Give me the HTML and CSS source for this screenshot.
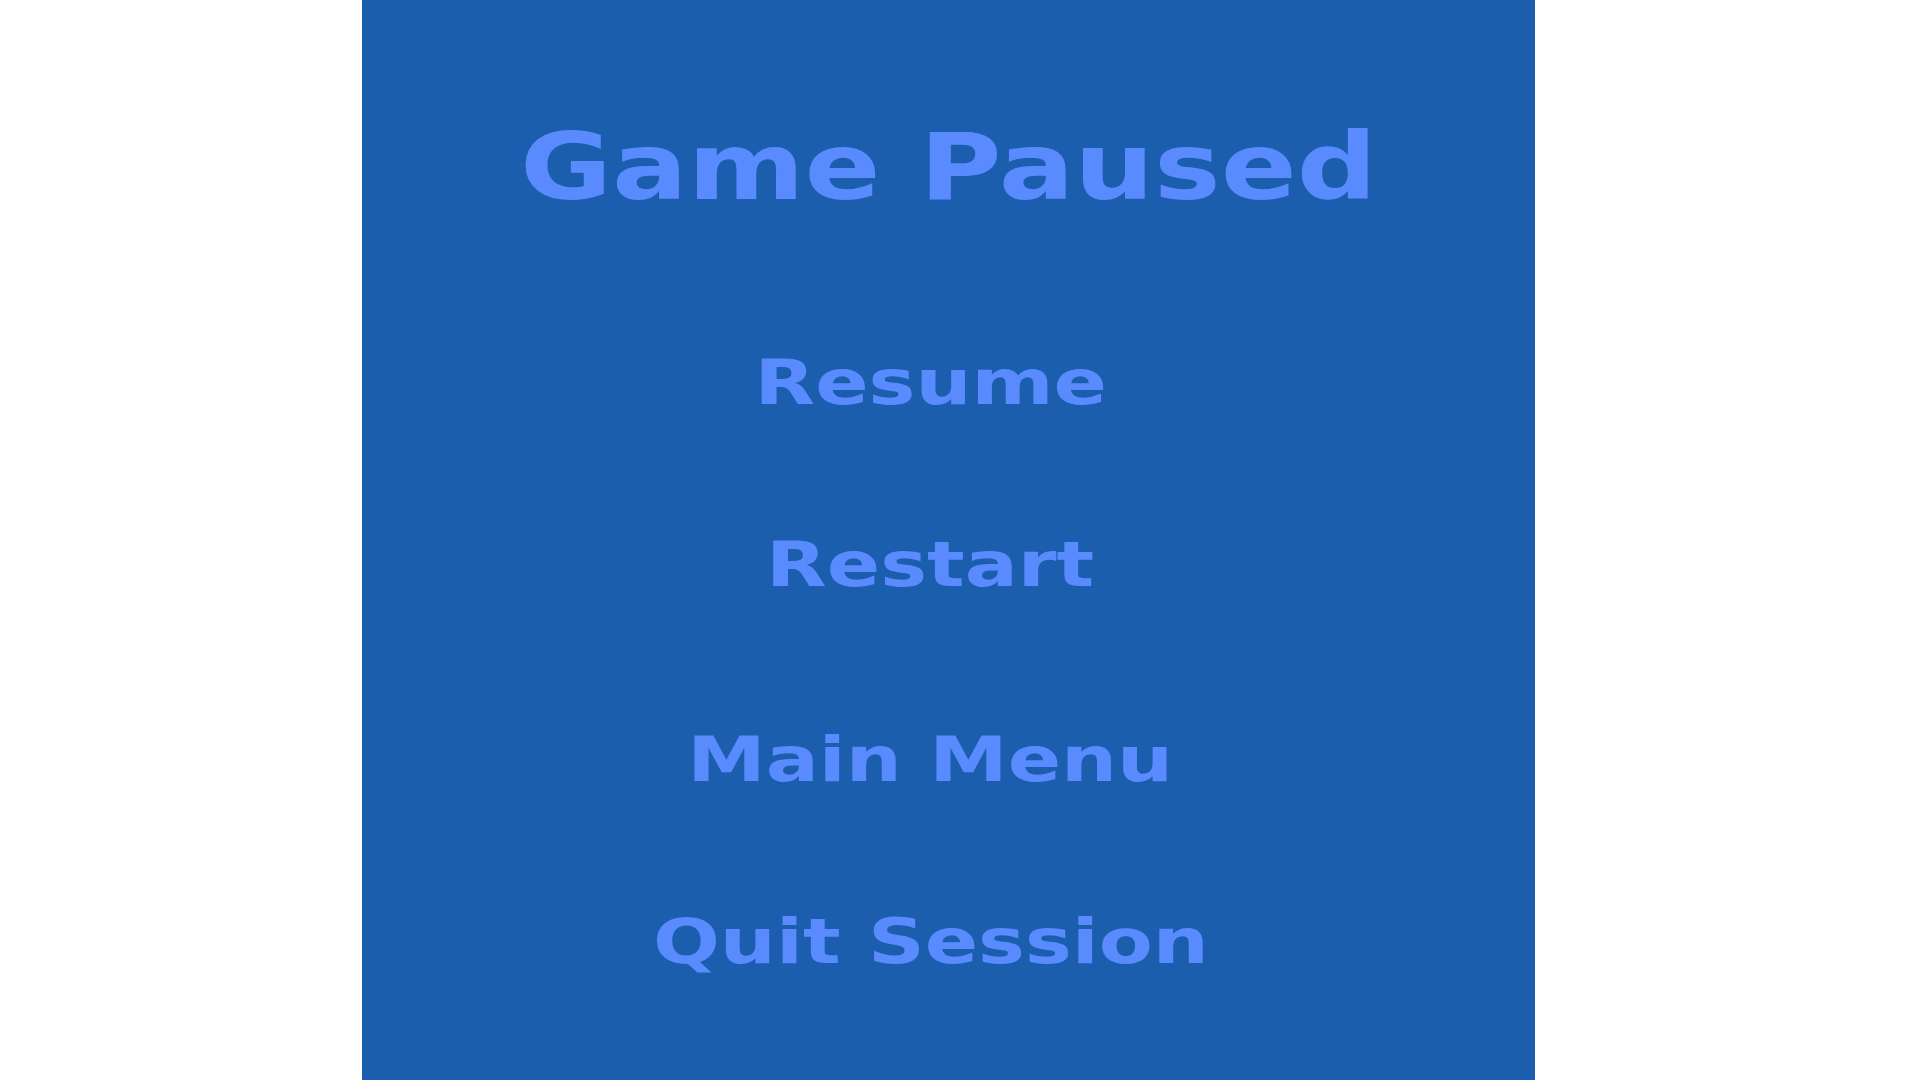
FILE: index.html
```html
<!DOCTYPE html>
<html lang="en">
<head>
<meta charset="utf-8">
<title>Game Paused</title>
<link rel="stylesheet" href="styles.css">
</head>
<body>
<main class="stage">
  <section class="panel">
    <h1 class="title"><span class="wide wide--title">Game Paused</span></h1>
    <nav class="menu">
      <button class="menu-item" type="button"><span class="wide">Resume</span></button>
      <button class="menu-item" type="button"><span class="wide">Restart</span></button>
      <button class="menu-item menu-item--spaced" type="button"><span class="wide">Main Menu</span></button>
      <button class="menu-item" type="button"><span class="wide">Quit Session</span></button>
    </nav>
  </section>
</main>
</body>
</html>
```
FILE: styles.css
```css
html, body {
  margin: 0;
  padding: 0;
  background: #ffffff;
}

.stage {
  display: flex;
  width: 1920px;
  height: 1080px;
  overflow: hidden;
}

.panel {
  margin-left: 362px;
  width: 1173px;
  height: 1080px;
  background: #1b5eae;
  display: flex;
  flex-direction: column;
  align-items: center;
  padding-top: 121px;
  box-sizing: border-box;
  font-family: "DejaVu Sans", "Liberation Sans", sans-serif;
  font-weight: 700;
  color: #598bff;
}

.title {
  margin: 0;
  font-size: 93px;
  line-height: 93px;
  font-weight: 700;
  white-space: nowrap;
}

.wide {
  display: inline-block;
  transform: scaleX(1.27);
  transform-origin: center;
  white-space: nowrap;
}

.wide--title {
  transform: scaleX(1.205);
}

.menu {
  margin-top: 138px;
  display: flex;
  flex-direction: column;
  align-items: center;
  gap: 120px;
  padding-right: 36px;
}

.menu-item {
  background: none;
  border: 0;
  padding: 0;
  margin: 0;
  font-family: inherit;
  font-weight: 700;
  color: inherit;
  font-size: 62px;
  line-height: 62px;
  height: 62px;
  cursor: pointer;
}

.menu-item--spaced {
  margin-top: 13px;
}
```
